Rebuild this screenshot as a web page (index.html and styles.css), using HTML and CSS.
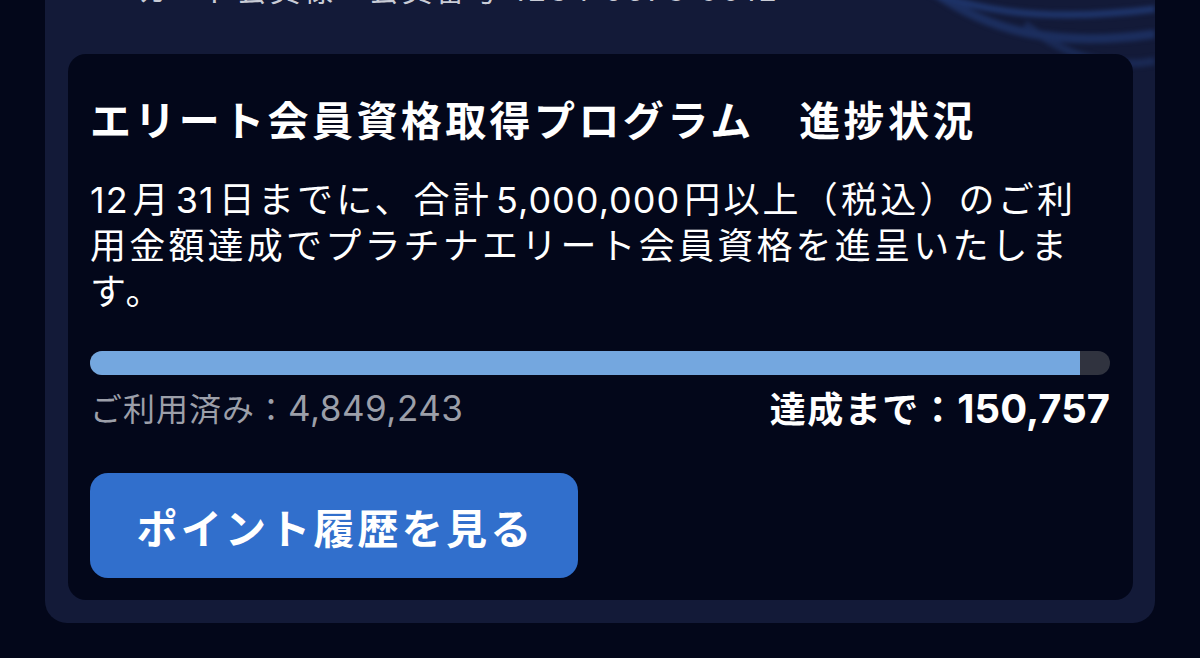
FILE: index.html
```html
<!DOCTYPE html>
<html lang="ja">
<head>
<meta charset="utf-8">
<title>エリート会員資格取得プログラム</title>
<link rel="stylesheet" href="styles.css">
</head>
<body>
<div class="panel">
  <svg class="waves" viewBox="0 0 300 120" preserveAspectRatio="none" aria-hidden="true">
    <path d="M0 -10 C 80 20, 160 35, 300 20" fill="none" stroke="#1f366e" stroke-width="7" opacity="0.9"/>
    <path d="M40 0 C 110 45, 190 58, 300 45" fill="none" stroke="#1e3368" stroke-width="9" opacity="0.8"/>
    <path d="M150 35 C 200 70, 250 80, 300 72" fill="none" stroke="#1c2f60" stroke-width="8" opacity="0.7"/>
  </svg>
  <div class="member-line">カード会員様　会員番号 1234 5678 9012</div>
  <section class="card">
    <h1 class="card-title">エリート会員資格取得プログラム　進捗状況</h1>
    <p class="card-desc"><span class="d first">12</span>月<span class="d">31</span>日までに、合計<span class="d">5,000,000</span>円以上（税込）のご利<br>用金額達成でプラチナエリート会員資格を進呈いたしま<br>す。</p>
    <div class="progress"><div class="progress-fill" style="width:97.1%"></div></div>
    <div class="progress-labels">
      <span class="used">ご利用済み：<span class="num">4,849,243</span></span>
      <span class="remain">達成まで：<span class="num">150,757</span></span>
    </div>
    <button class="history-btn" type="button">ポイント履歴を見る</button>
  </section>
</div>
</body>
</html>
```
FILE: styles.css
```css
html, body {
  margin: 0;
  padding: 0;
  background: #03071a;
  height: 658px;
  overflow: hidden;
  font-family: "Inter", "Noto Sans CJK JP", sans-serif;
  color: #ffffff;
}

.panel {
  position: relative;
  margin: -33px 45px 0 45px;
  padding: 0 22px 23px 23px;
  background: #131a38;
  border-radius: 22px;
  overflow: hidden;
}

.waves {
  position: absolute;
  right: 0;
  top: 22px;
  width: 260px;
  height: 120px;
  filter: blur(2px);
  pointer-events: none;
}

.member-line {
  position: relative;
  height: 46px;
  line-height: 46px;
  padding-left: 70px;
  font-size: 30px;
  color: #c9ccd6;
  letter-spacing: 3px;
  margin-bottom: 41px;
}

.card {
  position: relative;
  background: #03071a;
  border-radius: 18px;
  padding: 39px 23px 22px 22px;
}

.card-title {
  margin: 0;
  font-size: 41px;
  line-height: 56px;
  font-weight: 700;
  letter-spacing: 3.4px;
  white-space: nowrap;
}

.card-desc {
  margin: 28px 0 0 0;
  font-size: 36px;
  line-height: 46px;
  letter-spacing: 3.2px;
  font-weight: 400;
  white-space: nowrap;
}

.card-desc .d {
  letter-spacing: 1px;
  margin: 0 4px;
}

.card-desc .d.first {
  margin-left: 0;
}

.progress {
  margin-top: 36px;
  height: 24px;
  border-radius: 12px;
  background: #30333f;
  overflow: hidden;
}

.progress-fill {
  height: 100%;
  background: #74a7df;
}

.progress-labels {
  display: flex;
  justify-content: space-between;
  align-items: center;
  margin-top: 12px;
  height: 40px;
}

.used {
  font-size: 32px;
  color: #9c9fa9;
  letter-spacing: 1px;
}

.used .num {
  font-size: 35px;
  letter-spacing: 0.5px;
}

.remain {
  font-size: 36px;
  font-weight: 700;
  letter-spacing: 1.5px;
}

.remain .num {
  font-size: 40px;
  letter-spacing: 0;
}

.history-btn {
  display: block;
  margin-top: 46px;
  width: 488px;
  height: 105px;
  border: none;
  border-radius: 18px;
  background: #316fcc;
  color: #ffffff;
  font-family: inherit;
  font-size: 41px;
  font-weight: 700;
  letter-spacing: 3.2px;
  text-indent: 3px;
  cursor: pointer;
}
```
